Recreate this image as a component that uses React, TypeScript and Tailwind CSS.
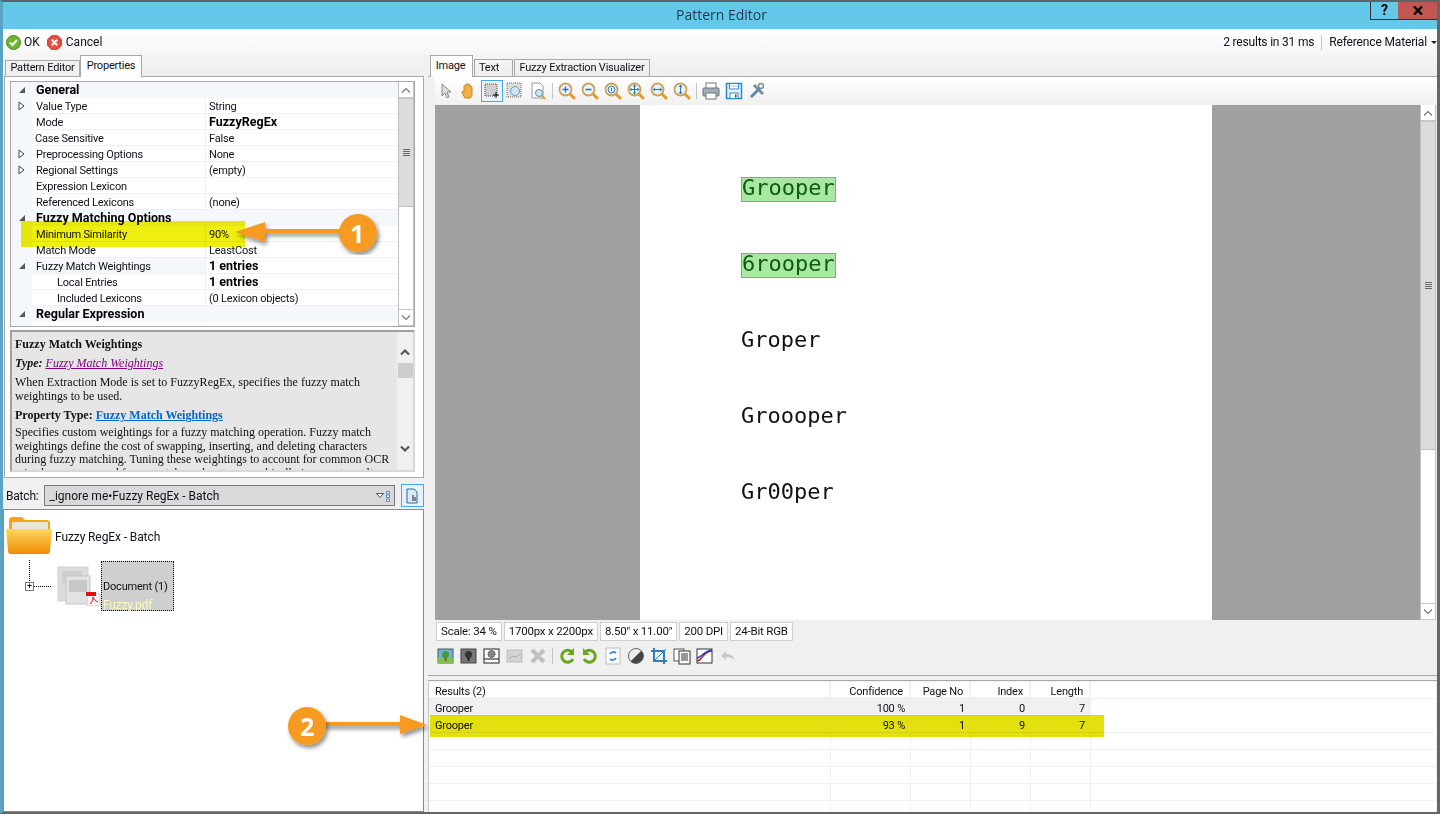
import type { FC, ReactNode } from "react";

const ui = "font-['Roboto',Arial,sans-serif] text-[11px] tracking-[-0.2px] text-[#10101a]";

type PropRow = {
  name?: string;
  value?: string;
  head?: boolean;
  bold?: boolean;
  glyph?: "open" | "closed";
  indent?: boolean;
  tight?: boolean;
};

const rows: PropRow[] = [
  { name: "General", head: true, glyph: "open" },
  { name: "Value Type", value: "String", glyph: "closed" },
  { name: "Mode", value: "FuzzyRegEx", bold: true },
  { name: "Case Sensitive", value: "False", tight: true },
  { name: "Preprocessing Options", value: "None", glyph: "closed" },
  { name: "Regional Settings", value: "(empty)", glyph: "closed" },
  { name: "Expression Lexicon" },
  { name: "Referenced Lexicons", value: "(none)" },
  { name: "Fuzzy Matching Options", head: true, glyph: "open" },
  { name: "Minimum Similarity", value: "90%" },
  { name: "Match Mode", value: "LeastCost" },
  { name: "Fuzzy Match Weightings", value: "1 entries", bold: true, glyph: "open" },
  { name: "Local Entries", value: "1 entries", bold: true, indent: true },
  { name: "Included Lexicons", value: "(0 Lexicon objects)", indent: true },
  { name: "Regular Expression", head: true, glyph: "open" },
];

const Chevron: FC<{ dir: "up" | "down"; thick?: boolean }> = ({ dir, thick }) => (
  <svg width="12" height="8" viewBox="0 0 12 8" fill="none" stroke={thick ? "#555" : "#777"} strokeWidth={thick ? 2.2 : 1.2}>
    <path d={dir === "up" ? "M2 6.5 6 2.5l4 4" : "M2 1.5l4 4 4-4"} />
  </svg>
);

const Expander: FC<{ kind?: "open" | "closed" }> = ({ kind }) => {
  if (kind === "open")
    return (
      <svg width="8" height="8" viewBox="0 0 8 8">
        <path d="M7 1v6H1z" fill="#555" />
      </svg>
    );
  if (kind === "closed")
    return (
      <svg width="7" height="10" viewBox="0 0 7 10" fill="#fff" stroke="#444">
        <path d="M1 1l5 4-5 4z" />
      </svg>
    );
  return null;
};

const PropertyRow: FC<{ row: PropRow }> = ({ row }) => (
  <div className={`flex h-4 shrink-0 ${row.head ? "bg-[#f4f7fc]" : ""}`}>
    <div className="flex w-[21px] shrink-0 items-center justify-center bg-[#f4f7fc]">
      <Expander kind={row.glyph} />
    </div>
    {row.head ? (
      <span className="pl-[4px] text-[12.500px] font-bold leading-[15px] tracking-normal text-black">{row.name}</span>
    ) : (
      <>
        <div
          className={`w-[174px] shrink-0 border-b border-r border-[#f0f0f0] leading-[17px] ${
            row.indent ? "pl-[25px]" : row.tight ? "pl-[3px]" : "pl-1"
          } ${row.glyph === "open" ? "bg-[#f4f7fc]" : ""}`}
        >
          {row.name}
        </div>
        <div
          className={`flex-1 border-b border-[#f0f0f0] pl-[3px] ${
            row.bold ? "text-[12.500px] font-bold leading-[15px] tracking-normal text-black" : "leading-[17px]"
          }`}
        >
          {row.value}
        </div>
      </>
    )}
  </div>
);

const Ico: FC<{ children: ReactNode; className?: string }> = ({ children, className = "" }) => (
  <svg width="18" height="18" viewBox="0 0 18 18" className={`shrink-0 ${className}`}>
    {children}
  </svg>
);

const Lens: FC<{ children?: ReactNode }> = ({ children }) => (
  <Ico>
    <path d="M11.5 11.5 16 16" stroke="#e89a20" strokeWidth="3" strokeLinecap="round" />
    <circle cx="7.5" cy="7.5" r="6" fill="#eaf4fb" stroke="#c9a35a" strokeWidth="1.8" />
    {children}
  </Ico>
);

const viewerTools: ReactNode[] = [
  <Lens key="in"><path d="M4.5 7.5h6M7.5 4.5v6" stroke="#2c73c4" strokeWidth="1.3" /></Lens>,
  <Lens key="out"><path d="M4.5 7.5h6" stroke="#2c73c4" strokeWidth="1.5" /></Lens>,
  <Lens key="one"><circle cx="7.5" cy="7.5" r="3.4" fill="none" stroke="#2c73c4" /><path d="M7.5 5.8v3.4" stroke="#2c73c4" /></Lens>,
  <Lens key="fit"><path d="M7.5 3.2v8.6M3.2 7.5h8.6M6 4.5l1.5-1.4L9 4.5M6 10.5l1.5 1.4L9 10.5M4.5 6 3.1 7.5 4.5 9M10.5 6l1.4 1.5L10.5 9" stroke="#2c73c4" fill="none" /></Lens>,
  <Lens key="width"><path d="M3.2 7.5h8.6M5 5.8 3.2 7.5 5 9.2M10 5.8l1.8 1.7L10 9.2" stroke="#2c73c4" fill="none" /></Lens>,
  <Lens key="height"><path d="M7.5 3.2v8.6M5.8 5l1.7-1.8L9.2 5M5.8 10l1.7 1.8L9.2 10" stroke="#2c73c4" fill="none" /></Lens>,
];

const Sep = () => <div className="h-[16px] w-px bg-[#c4c4c4]" />;

const Scrollbar: FC<{ thumbH: number; grip?: boolean }> = ({ thumbH, grip }) => (
  <div className="flex w-4 shrink-0 flex-col border-x border-[#c0c0c0] bg-white">
    <div className="flex h-[17px] shrink-0 items-center justify-center border-b-2 border-[#c8c8c8] bg-white">
      <Chevron dir="up" />
    </div>
    <div className="flex flex-1 flex-col">
      <div style={{ height: thumbH }} className="flex items-center justify-center border-b border-[#c0c0c0] bg-[#dcdcdc]">
        {grip && (
          <div className="flex w-[7px] flex-col gap-px">
            <div className="h-px bg-[#666]" />
            <div className="h-px bg-[#666]" />
            <div className="h-px bg-[#666]" />
            <div className="h-px bg-[#666]" />
          </div>
        )}
      </div>
    </div>
    <div className="flex h-[17px] shrink-0 items-center justify-center border-y border-[#c8c8c8] bg-white">
      <Chevron dir="down" />
    </div>
  </div>
);

const ResultCell: FC<{ w: string; children?: ReactNode; head?: boolean; left?: boolean }> = ({ w, children, head, left }) => (
  <div
    className={`${w} shrink-0 px-[6px] leading-[20px] ${left ? "text-left" : "text-right"} ${
      head ? "h-[17px] border-r-2 border-b-2 border-[#f0f0f0] bg-white" : ""
    }`}
  >
    {children}
  </div>
);

const Page: FC<{ word: string; hit?: boolean }> = ({ word, hit }) => (
  <div className="flex h-[76px] items-center pl-[101px]">
    <span
      className={`font-['DejaVu_Sans_Mono',monospace] text-[22px] tracking-normal ${
        hit
          ? "mt-[5px] h-[25px] w-[95px] border border-[#9a9a9a] bg-[#a8e8a0] leading-[20px] text-[#0b5c12]"
          : "leading-[25px] text-[#111]"
      }`}
    >
      {word}
    </span>
  </div>
);

export default function App() {
  return (
    <div className={`${ui} relative flex h-[814px] w-[1440px] flex-col overflow-hidden border-t-2 border-r-[3px] border-b-2 border-l-[3px] border-t-[#5f6468] border-r-[#666] border-b-[#666] border-l-[#5ba3c6] bg-[#f0f0f0]`}>
      {/* title bar */}
      <div className="grid h-[27px] shrink-0 grid-cols-[1fr_auto_1fr] bg-[#64c8ea]">
        <div />
        <div className="pl-[3px] pt-[3px] font-['Open_Sans',sans-serif] text-[14px] leading-5 tracking-normal text-[#1c3a48]">Pattern Editor</div>
        <div className="flex justify-end">
          <div className="flex h-[18px] w-[28px] items-center justify-center border-b border-l border-[#333] text-[14px] font-bold text-black">?</div>
          <div className="flex h-[18px] w-[39px] items-center justify-center border-b border-[#333] bg-[#c0584f]">
            <svg width="10" height="9" viewBox="0 0 10 9" stroke="#000" strokeWidth="2.400">
              <path d="M1 .5l8 8M9 .5l-8 8" />
            </svg>
          </div>
        </div>
      </div>

      {/* action bar */}
      <div className="flex h-[26px] shrink-0 items-center bg-gradient-to-b from-white to-[#f5f5f5] pl-[3px] text-[12px] tracking-normal">
        <svg width="15" height="15" viewBox="0 0 15 15">
          <circle cx="7.5" cy="7.5" r="7" fill="#6db52e" stroke="#4b8a1e" />
          <path d="M4 7.5 6.5 10 11 5" fill="none" stroke="#fff" strokeWidth="2" />
        </svg>
        <span className="ml-[3px]">OK</span>
        <svg width="15" height="15" viewBox="0 0 15 15" className="ml-[7px]">
          <path d="M4.5.7h6l3.8 3.8v6l-3.8 3.8h-6L.7 10.500v-6z" fill="#e8503e" stroke="#b8352a" />
          <path d="M4.800 4.800l5.400 5.400M10.200 4.800l-5.400 5.400" stroke="#fff" strokeWidth="2" />
        </svg>
        <span className="ml-[4px]">Cancel</span>
        <span className="ml-auto tracking-[-0.2px]">2 results in 31 ms</span>
        <div className="mx-[7px] h-[15px] w-px bg-[#c8c8c8]" />
        <span className="tracking-[-0.15px]">Reference Material</span>
        <span className="ml-[4px] border-x-[3px] border-t-[3px] border-x-transparent border-t-[#222]" />
      </div>

      <div className="flex min-h-0 flex-1">
        {/* left column */}
        <div className="flex w-[421px] shrink-0 flex-col">
          <div className="flex h-[21px] shrink-0 items-end bg-gradient-to-b from-[#f5f5f5] to-[#eeeeee] pl-[2px]">
            <div className="flex h-[16px] w-[75px] items-center justify-center border border-b-0 border-[#a8a8a8] bg-[#f0f0f0]">Pattern Editor</div>
            <div className="z-10 -mb-px flex h-[22px] w-[62px] items-start justify-center border border-b-0 border-[#a8a8a8] bg-white pt-[2px]">Properties</div>
          </div>
          <div className="ml-px flex h-[402px] shrink-0 flex-col border border-[#a8a8a8] bg-white pl-[5px] pr-[8px] pt-[4px]">
            <div className="flex h-[246px] shrink-0 border border-[#a8a8a8]">
              <div className="flex min-w-0 flex-1 flex-col overflow-hidden bg-white">
                {rows.map((row) => (
                  <PropertyRow key={row.name} row={row} />
                ))}
                <div className="flex flex-1">
                  <div className="w-[21px] bg-[#f4f7fc]" />
                  <div className="w-[174px] border-r border-[#f0f0f0]" />
                </div>
              </div>
              <Scrollbar thumbH={108} grip />
            </div>
            <div className="mt-[3px] flex h-[142px] shrink-0 overflow-hidden border-2 border-[#a0a0a0] border-r-[#d8d8d8] border-b-[#d8d8d8] bg-[#e6e6e6] font-['Liberation_Serif',serif] text-[12px] leading-[14px] tracking-normal text-[#111]">
              <div className="min-w-0 flex-1 overflow-hidden pl-[3px] pt-[5px]">
                <div className="font-bold">Fuzzy Match Weightings</div>
                <div className="mt-[5px]">
                  <b><i>Type: </i></b>
                  <a className="italic text-[#800080] underline">Fuzzy Match Weightings</a>
                </div>
                <div className="mt-[5px] w-[370px]">When Extraction Mode is set to FuzzyRegEx, specifies the fuzzy match weightings to be used.</div>
                <div className="mt-[5px] font-bold">
                  Property Type: <a className="text-[#0066cc] underline">Fuzzy Match Weightings</a>
                </div>
                <div className="mt-[4px] w-[375px] leading-[13.500px]">
                  Specifies custom weightings for a fuzzy matching operation. Fuzzy match weightings define the cost of swapping, inserting, and deleting characters during fuzzy matching. Tuning these weightings to account for common OCR mistakes or to reward fuzzy matches when typographically incorrect results
                </div>
              </div>
              <div className="flex w-4 shrink-0 flex-col items-center bg-[#f0f0f0] pt-[16px]">
                <Chevron dir="up" thick />
                <div className="mt-[7px] h-[15px] w-[15px] bg-[#cdcdcd]" />
                <div className="mb-[17px] mt-auto"><Chevron dir="down" thick /></div>
              </div>
            </div>
          </div>

          <div className="flex h-[31px] shrink-0 items-center pt-[4px]">
            <span className="ml-[3px] text-[12px]">Batch:</span>
            <div className="ml-[5px] flex h-[21px] w-[351px] items-center border border-[#7a7a7a] bg-[#d9d9d9] pl-[5px] pr-[2px] text-[12px] tracking-normal">
              _ignore me•Fuzzy RegEx - Batch
              <svg width="16" height="12" viewBox="0 0 16 12" className="ml-auto" fill="#fff" stroke="#556">
                <path d="M.5 3.500h7L4 7.500z" />
                <path d="M10.500 1.500h3v2.500h-3zM10.500 5h3v2.500h-3zM10.500 9h3v2.500h-3z" stroke="#4a8ab5" />
              </svg>
            </div>
            <div className="ml-[6px] flex h-[23px] w-[23px] items-center justify-center border border-[#3fa9f5] bg-[#e6f3fc]">
              <svg width="14" height="16" viewBox="0 0 14 16" fill="#dbe9f4" stroke="#2f6c9c">
                <path d="M2 1h7l3 3v11H2z" />
                <path d="M8 7v6M10 9v4" stroke="#223" />
              </svg>
            </div>
          </div>

          {/* batch tree */}
          <div className="min-h-0 flex-1 border border-[#8a8a8a] bg-white pl-[2px]">
            <div className="mt-[5px] flex h-[40px] items-center">
              <svg width="48" height="40" viewBox="0 0 48 40">
                <defs>
                  <linearGradient id="fold" x1="0" y1="0" x2="0" y2="1">
                    <stop offset="0" stopColor="#ffd95e" />
                    <stop offset="1" stopColor="#f08a05" />
                  </linearGradient>
                </defs>
                <path d="M3 6c0-3 1-4 4-4h9l3 3h21c3 0 4 1 4 4v6H3z" fill="#f2a516" />
                <path d="M6 7h36v9H6z" fill="#e8e4d8" />
                <path d="M0 14h46l-2 22c0 2-1 3-3 3H5c-2 0-3-1-3-3z" fill="url(#fold)" />
              </svg>
              <span className="ml-[1px] mt-[3px] text-[12px] tracking-[-0.1px]">Fuzzy RegEx - Batch</span>
            </div>
            <div className="mt-[5px] flex h-[52px] items-center">
              <div className="relative ml-[19px] flex h-[52px] w-[32px] items-center">
                <div className="absolute left-[4px] top-0 h-[21px] border-l border-dotted border-black" />
                <div className="z-10 mt-[1px] flex h-[9px] w-[9px] items-center justify-center border border-[#777] bg-white text-[9px] leading-none text-black">+</div>
                <div className="mt-[1px] w-[17px] border-t border-dotted border-black" />
              </div>
              <svg width="46" height="40" viewBox="0 0 46 40" className="shrink-0">
                <rect x="1" y="1" width="30" height="34" fill="#dcdcdc" stroke="#cfcfcf" />
                <rect x="5" y="5" width="20" height="12" fill="#cfcfcf" />
                <rect x="9" y="10" width="24" height="28" fill="#e2e2e2" stroke="#c6c6c6" />
                <rect x="12" y="14" width="18" height="12" fill="#c8c8c8" />
                <rect x="30" y="28" width="13" height="12" fill="#f4f4f4" stroke="#ccc" />
                <rect x="29" y="26" width="10" height="4" fill="#e01010" />
                <path d="M33 38c2-2 3-4 3-7 1 3 3 4 5 5" fill="none" stroke="#e01010" />
              </svg>
              <div className="-ml-[2px] flex h-[50px] w-[73px] shrink-0 flex-col border border-dotted border-black bg-[#cfcfcf] pl-[1px] pt-[18px]">
                <span className="whitespace-nowrap leading-[14px]">Document (1)</span>
                <span className="mt-[5px] text-[12px] leading-[12px] text-[#fdf8c0]">Fuzzy.pdf</span>
              </div>
            </div>
          </div>
        </div>

        {/* right column */}
        <div className="ml-[4px] flex min-w-0 flex-1 flex-col">
          <div className="flex h-[21px] shrink-0 items-end bg-gradient-to-b from-[#f5f5f5] to-[#eeeeee] pl-[2px]">
            <div className="z-10 -mb-px flex h-[22px] w-[43px] items-start justify-center border border-b-0 border-[#a8a8a8] bg-white pr-[2px] pt-[2px]">Image</div>
            <div className="ml-[1px] flex h-[17px] w-[39px] items-center border border-b-0 border-[#a8a8a8] pl-[4px]">Text</div>
            <div className="ml-[1px] flex h-[17px] w-[136px] items-center justify-center border border-b-0 border-[#a8a8a8]">Fuzzy Extraction Visualizer</div>
          </div>
          <div className="flex min-h-0 flex-1 flex-col border-t border-[#a8a8b4] pl-[7px]">
            <div className="flex h-[28px] shrink-0 items-center gap-[5px] bg-gradient-to-b from-white to-[#f0f0f0] pl-[2px]">
              <Ico>
                <path d="M5 2v12l3-3 2 5 2-1-2-5h4z" fill="#ddd" stroke="#888" />
              </Ico>
              <Ico>
                <path d="M5 16c-2-3-3-5-3-6s1-1 2 0V4c0-1 2-1 2 0V2.500c0-1 2-1 2 0V3c0-1 2-1 2 0v2c0-1 2-1 2 0v7c0 2-1 4-2 4z" fill="#f2b04a" stroke="#c98620" />
              </Ico>
              <div className="-mx-[2px] flex h-[22px] w-[22px] items-center justify-center border border-[#3fa9f5] bg-[#e8f4fc]">
                <svg width="16" height="16" viewBox="0 0 16 16">
                  <rect x="1" y="1" width="12" height="12" fill="#cfcfcf" stroke="#444" strokeDasharray="1 1" />
                  <path d="M12 9v6M9 12h6" stroke="#000" />
                </svg>
              </div>
              <Ico>
                <rect x="1" y="1" width="14" height="14" fill="#e0e0e0" stroke="#666" strokeDasharray="1 1" />
                <circle cx="9" cy="9" r="4.500" fill="#cfe4f5" stroke="#6a9cc0" />
              </Ico>
              <Ico>
                <path d="M3 1h8l3 3v12H3z" fill="#fff" stroke="#999" />
                <circle cx="10" cy="11" r="3.500" fill="#cfe4f5" stroke="#5a8cb0" />
                <path d="M12.500 13.500 16 17" stroke="#e89a20" strokeWidth="2" />
              </Ico>
              <Sep />
              {viewerTools}
              <Sep />
              <Ico>
                <rect x="4" y="1" width="10" height="6" fill="#fff" stroke="#777" />
                <rect x="1" y="6" width="16" height="8" rx="1" fill="#a3adb5" stroke="#6a747c" />
                <rect x="4" y="11" width="10" height="6" fill="#fff" stroke="#777" />
              </Ico>
              <Ico>
                <path d="M1.500 1.500h15v15h-15z" fill="#e8f2fa" stroke="#2f89c9" strokeWidth="1.500" />
                <path d="M4.500 2v5h9V2" fill="#fff" stroke="#2f89c9" />
                <path d="M5.500 4h7" stroke="#9cc4e0" />
                <rect x="5" y="11" width="8" height="5.500" fill="#fff" stroke="#2f89c9" />
                <rect x="10" y="12.500" width="1.500" height="3" fill="#444" />
              </Ico>
              <Ico>
                <path d="M3 15 12 6M6 3l9 9" stroke="#7f8c96" strokeWidth="3" />
                <path d="M3 15 12 6" stroke="#3c8fc8" strokeWidth="1.500" />
                <circle cx="13" cy="4" r="2.500" fill="none" stroke="#7f8c96" strokeWidth="1.500" />
              </Ico>
            </div>

            {/* page preview */}
            <div className="flex h-[515px] shrink-0 pr-[1px]">
              <div className="flex min-w-0 flex-1 bg-[#a0a0a0]">
                <div className="ml-[205px] w-[572px] bg-white pt-[44px]">
                  <Page word="Grooper" hit />
                  <Page word="6rooper" hit />
                  <Page word="Groper" />
                  <Page word="Groooper" />
                  <Page word="Gr00per" />
                </div>
              </div>
              <Scrollbar thumbH={328} grip />
            </div>

            <div className="flex h-[23px] shrink-0 items-center">
              {["Scale: 34 %", "1700px x 2200px", '8.50" x 11.00"', "200 DPI", "24-Bit RGB"].map((t, i) => (
                <div
                  key={t}
                  className={`mr-[2px] flex h-[19px] items-center border border-[#cfcfcf] bg-white px-[4px] text-[11.500px] ${
                    i === 0 ? "ml-px" : ""
                  }`}
                >
                  {t}
                </div>
              ))}
            </div>
            <div className="flex h-[26px] shrink-0 items-center gap-[5px] bg-[#f0f0f0] pl-[2px]">
              <Ico>
                <rect x="1" y="2" width="15" height="14" fill="#6fb0e0" stroke="#555" />
                <rect x="1" y="11" width="15" height="5" fill="#7fbf5a" />
                <circle cx="8.500" cy="7.500" r="3.500" fill="#4a9a3a" />
                <rect x="7.500" y="10" width="2" height="4" fill="#8a5a2a" />
              </Ico>
              <Ico>
                <rect x="1" y="2" width="15" height="14" fill="#777" stroke="#444" />
                <circle cx="8.500" cy="7.500" r="3.500" fill="#333" />
                <rect x="7.500" y="10" width="2" height="4" fill="#222" />
              </Ico>
              <Ico>
                <rect x="1" y="2" width="15" height="14" fill="#fff" stroke="#222" />
                <circle cx="8.500" cy="7" r="3.500" fill="#888" stroke="#111" strokeDasharray="1 1" />
                <path d="M1 12h15" stroke="#111" />
              </Ico>
              <Ico>
                <rect x="1" y="3" width="15" height="12" fill="#d4d4d4" stroke="#bbb" />
                <path d="M3 12l4-3 3 1 4-3" stroke="#aaa" fill="none" />
              </Ico>
              <Ico>
                <path d="M3 3l12 12M15 3 3 15" stroke="#c0c0c0" strokeWidth="4" />
              </Ico>
              <Sep />
              <Ico>
                <path d="M14 5a6 6 0 1 0 1 7" fill="none" stroke="#6aa51e" strokeWidth="3" />
                <path d="M16 1v7h-7z" fill="#6aa51e" />
              </Ico>
              <Ico>
                <path d="M4 5a6 6 0 1 1-1 7" fill="none" stroke="#6aa51e" strokeWidth="3" />
                <path d="M2 1v7h7z" fill="#6aa51e" />
              </Ico>
              <Ico>
                <rect x="2" y="1" width="14" height="16" fill="#fff" stroke="#bbb" />
                <path d="M12 6a4 4 0 0 0-6 1M6 12a4 4 0 0 0 6-1" fill="none" stroke="#3c8fd0" strokeWidth="2" />
              </Ico>
              <Ico>
                <circle cx="9" cy="9" r="7.500" fill="#eee" stroke="#666" />
                <path d="M14.300 3.700A7.500 7.500 0 0 1 3.700 14.300z" fill="#444" />
              </Ico>
              <Ico>
                <path d="M4 1v13h13M1 4h13v13" fill="none" stroke="#2f7fc0" strokeWidth="2" />
                <path d="M4 14 16 2" stroke="#2f7fc0" />
              </Ico>
              <Ico>
                <rect x="1" y="2" width="10" height="12" fill="#fff" stroke="#555" />
                <rect x="6" y="4" width="11" height="13" fill="#fff" stroke="#333" />
                <path d="M8 7h7M8 9h7M8 11h7M8 13h7" stroke="#333" />
              </Ico>
              <Ico>
                <rect x="1" y="2" width="15" height="14" fill="#fff" stroke="#333" />
                <path d="M1 14C6 14 6 5 16 4" fill="none" stroke="#d02020" strokeWidth="1.500" />
                <path d="M1 11C6 10 8 4 16 3" fill="none" stroke="#1a40c8" strokeWidth="1.500" />
              </Ico>
              <Ico>
                <path d="M2 9 7 4v3c5 0 8 2 9 7-2-3-5-4-9-4v3z" fill="#c8c8c8" />
              </Ico>
            </div>
            <div className="-ml-[7px] mt-[6px] h-[6px] shrink-0 border-y border-[#a8a8a8] bg-[#f0f0f0]" />

            {/* results */}
            <div className="-ml-[7px] mr-[1px] mt-px min-h-0 flex-1 border-l border-[#c8c8c8] bg-white">
              <div className="flex h-[17px]">
                <ResultCell w="w-[402px]" head left>Results (2)</ResultCell>
                <ResultCell w="w-[80px]" head>Confidence</ResultCell>
                <ResultCell w="w-[60px]" head>Page No</ResultCell>
                <ResultCell w="w-[60px]" head>Index</ResultCell>
                <ResultCell w="w-[60px]" head>Length</ResultCell>
                <div className="flex-1 border-b border-[#f0f0f0]" />
              </div>
              <div className="flex h-[17px] w-[662px] bg-[#f0f0f0]">
                <ResultCell w="w-[402px]" left>Grooper</ResultCell>
                <ResultCell w="w-[80px]">100 %</ResultCell>
                <ResultCell w="w-[60px]">1</ResultCell>
                <ResultCell w="w-[60px]">0</ResultCell>
                <ResultCell w="w-[60px]">7</ResultCell>
              </div>
              <div className="flex h-[17px] border-b border-[#f0f0f0]">
                <ResultCell w="w-[402px]" left>Grooper</ResultCell>
                <ResultCell w="w-[80px]">93 %</ResultCell>
                <ResultCell w="w-[60px]">1</ResultCell>
                <ResultCell w="w-[60px]">9</ResultCell>
                <ResultCell w="w-[60px]">7</ResultCell>
              </div>
              {[0, 1, 2, 3, 4].map((i) => (
                <div key={i} className="flex h-[17px] border-b border-[#f0f0f0]">
                  <div className="w-[402px] border-r border-[#f0f0f0]" />
                  <div className="w-[80px] border-r border-[#f0f0f0]" />
                  <div className="w-[60px] border-r border-[#f0f0f0]" />
                  <div className="w-[60px] border-r border-[#f0f0f0]" />
                  <div className="w-[60px] border-r border-[#f0f0f0]" />
                </div>
              ))}
            </div>
          </div>
        </div>
      </div>

      {/* annotations: highlighter strokes and numbered callouts */}
      <div className="absolute left-[18px] top-[219px] h-[26px] w-[224px] bg-[#eeee10] mix-blend-multiply" />
      <div className="absolute left-[427px] top-[713px] h-[22px] w-[674px] bg-[#e3e010] mix-blend-multiply" />
      <svg className="pointer-events-none absolute left-[227px] top-[193px]" width="160" height="60" viewBox="0 0 160 60">
        <defs>
          <filter id="sh" x="-30%" y="-30%" width="170%" height="170%">
            <feDropShadow dx="2" dy="3" stdDeviation="2" floodColor="#000" floodOpacity="0.45" />
          </filter>
        </defs>
        <path d="M5 37 35 27v7h81v4H35v9z" fill="#f79a24" filter="url(#sh)" />
        <circle cx="128" cy="38" r="19" fill="#f79a24" filter="url(#sh)" />
      </svg>
      <span className="absolute left-[347px] top-[215px] font-['Open_Sans',sans-serif] text-[25px] font-bold leading-8 tracking-normal text-white">1</span>
      <svg className="pointer-events-none absolute left-[277px] top-[694px]" width="160" height="60" viewBox="0 0 160 60">
        <path d="M147 29 120 19v7H30v4h90v8z" fill="#f79a24" filter="url(#sh)" />
        <circle cx="27" cy="30" r="19" fill="#f79a24" filter="url(#sh)" />
      </svg>
      <span className="absolute left-[297px] top-[708px] font-['Open_Sans',sans-serif] text-[25px] font-bold leading-8 tracking-normal text-white">2</span>
    </div>
  );
}
